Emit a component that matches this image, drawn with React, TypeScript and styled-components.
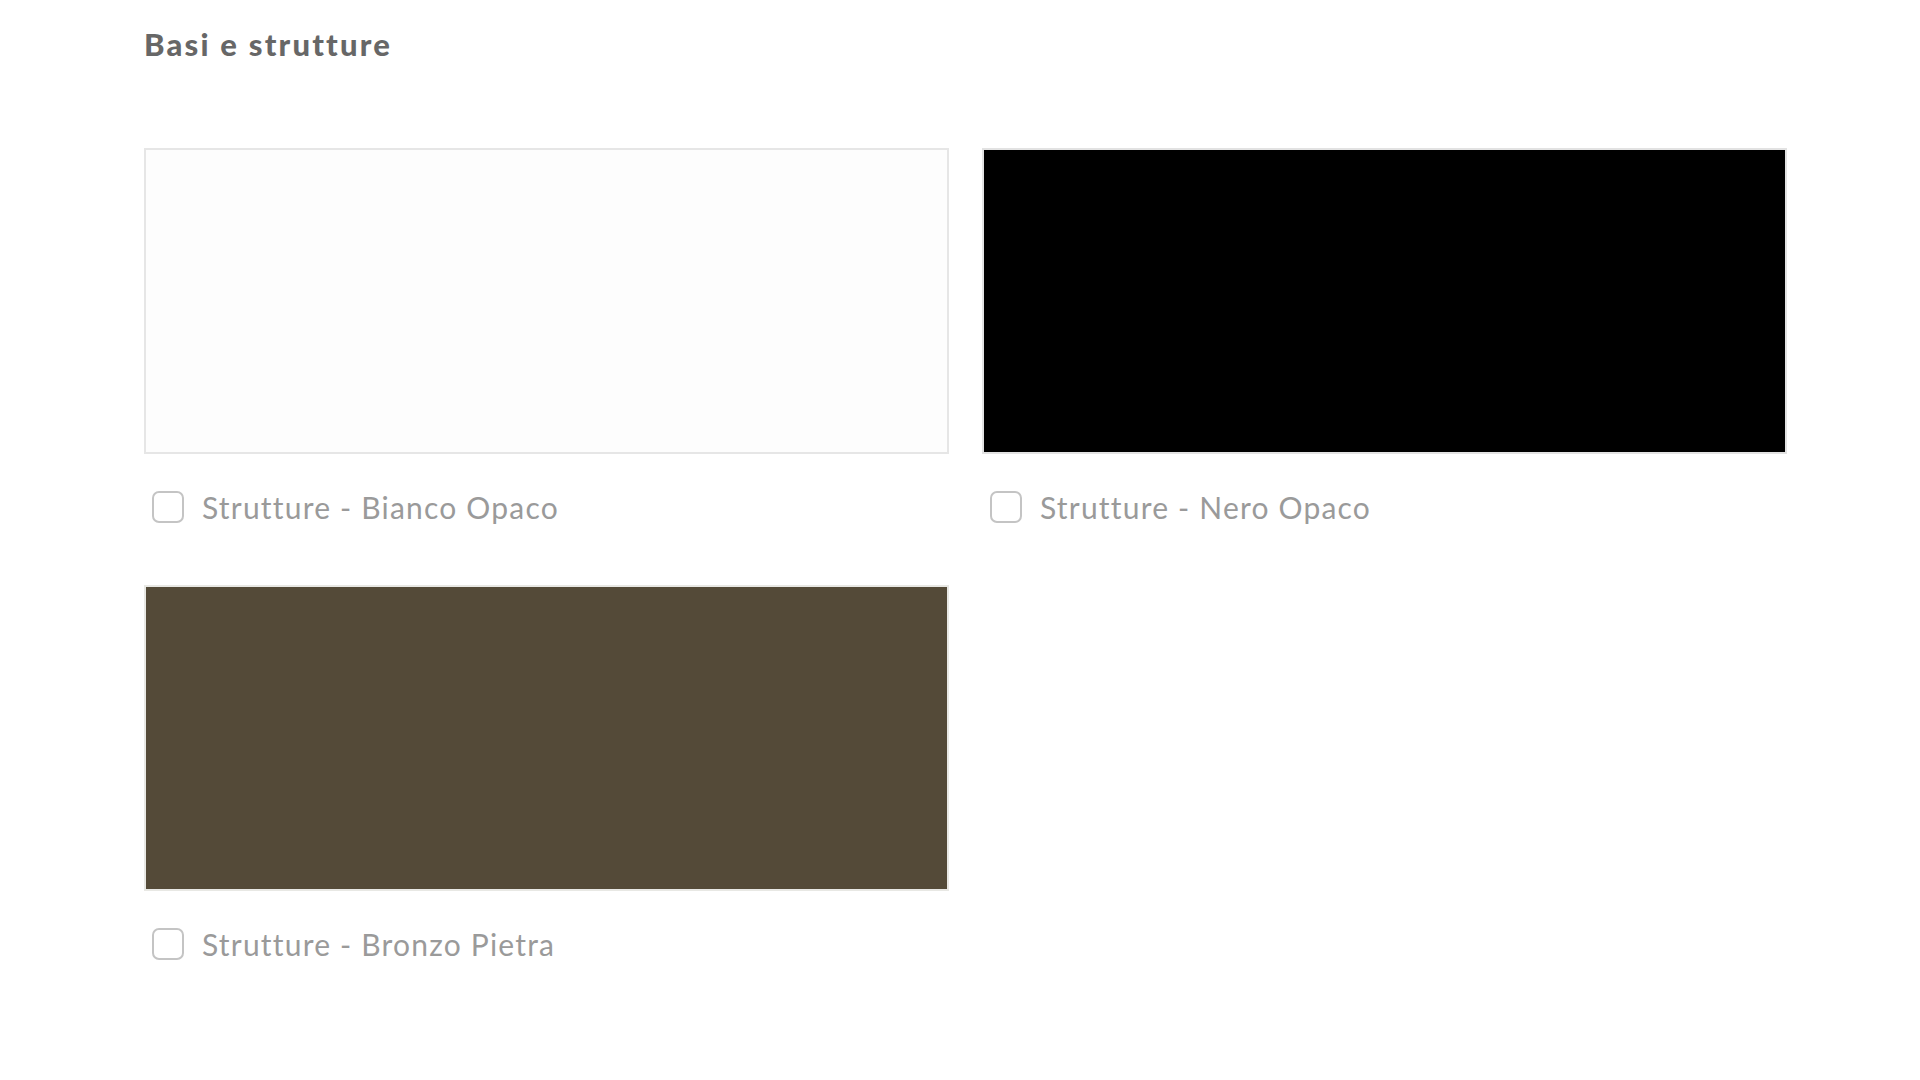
import styled, { createGlobalStyle } from "styled-components";

const GlobalStyle = createGlobalStyle`
  body {
    margin: 0;
    background: #ffffff;
    font-family: "Lato", "Liberation Sans", sans-serif;
  }
`

const Page = styled.main`
  padding: 24px 0 0 144px;
  width: 1643px;
`

const Title = styled.h2`
  margin: 0;
  font-size: 31px;
  font-weight: 900;
  color: #676767;
  letter-spacing: 2.2px;
  line-height: 40px;
`

const Grid = styled.div`
  display: grid;
  grid-template-columns: 805px 805px;
  column-gap: 33px;
  row-gap: 62px;
  margin-top: 84px;
`

const Option = styled.div`
  display: flex;
  flex-direction: column;
`

const Swatch = styled.div<{ $color: string; $edge: string }>`
  box-sizing: border-box;
  height: 306px;
  background-color: ${(p) => p.$color};
  border: 2px solid ${(p) => p.$edge};
`

const Label = styled.label`
  display: flex;
  align-items: center;
  gap: 18px;
  margin-top: 37px;
  padding-left: 8px;
  font-size: 30px;
  line-height: 32px;
  letter-spacing: 1.2px;
  color: #9a9a9a;
  cursor: pointer;
`

const Box = styled.span`
  box-sizing: border-box;
  width: 32px;
  height: 32px;
  border: 2px solid #c4c4c4;
  border-radius: 7px;
  background: #fff;
  flex-shrink: 0;
`

const options = [
  { name: "Strutture - Bianco Opaco", color: "#fdfdfd", edge: "#e6e6e6" },
  { name: "Strutture - Nero Opaco", color: "#000000", edge: "#e2e2e2" },
  { name: "Strutture - Bronzo Pietra", color: "#544a38", edge: "#e8e8e4" },
];

export default function App() {
  return (
    <>
      <GlobalStyle />
      <Page>
        <Title>Basi e strutture</Title>
        <Grid>
          {options.map((o) => (
            <Option key={o.name}>
              <Swatch $color={o.color} $edge={o.edge} />
              <Label>
                <Box />
                {o.name}
              </Label>
            </Option>
          ))}
        </Grid>
      </Page>
    </>
  );
}
